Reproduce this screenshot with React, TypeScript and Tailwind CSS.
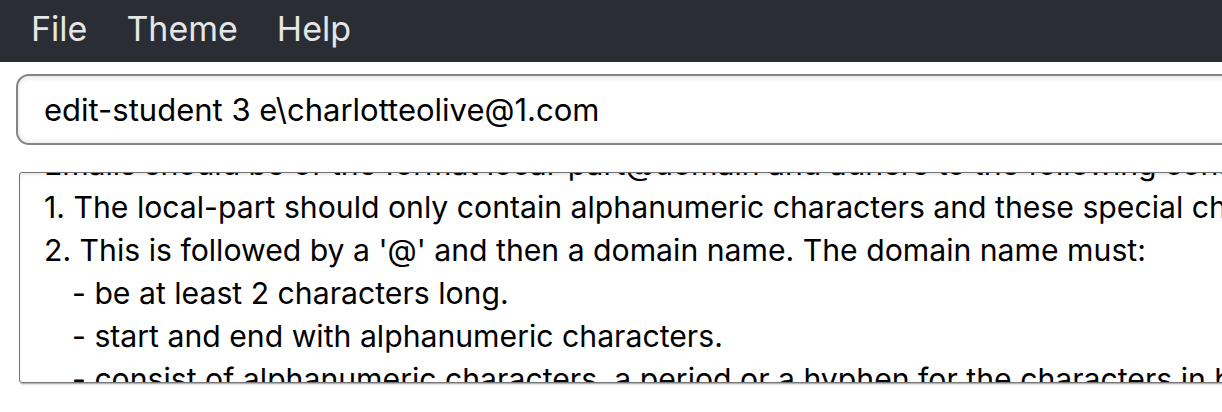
const lines = [
  { text: 'Emails should be of the format local-part@domain and adhere to the following constraints:', sub: false },
  { text: '1. The local-part should only contain alphanumeric characters and these special characters, excluding the parentheses, (+_.-).', sub: false },
  { text: "2. This is followed by a '@' and then a domain name. The domain name must:", sub: false },
  { text: '- be at least 2 characters long.', sub: true },
  { text: '- start and end with alphanumeric characters.', sub: true },
  { text: '- consist of alphanumeric characters, a period or a hyphen for the characters in between, if any.', sub: true },
];

export default function App() {
  return (
    <div
      className="w-[1222px] h-[412px] overflow-hidden bg-white"
      style={{ fontFamily: 'Inter, "Noto Sans", sans-serif' }}
    >
      <div className="h-[62px] bg-[#2a2d34] flex items-center gap-[39px] pl-[31px] pb-[6px] text-[34px] text-[#e6e6e6]">
        <span>File</span>
        <span>Theme</span>
        <span>Help</span>
      </div>

      <div className="pl-4 pt-3">
        <div className="w-[1400px] h-[71px] rounded-[13px] border-2 border-[#858585] bg-white shadow-[inset_0_3px_4px_rgba(0,0,0,0.08),inset_0_-3px_4px_rgba(0,0,0,0.06)] flex items-center pl-[26px] pt-[2px] text-[31px] text-black">
          edit-student 3 e\charlotteolive@1.com
        </div>
      </div>

      <div className="pl-[19px] pt-[27px]">
        <div className="w-[1400px] h-[211px] rounded-[3px] border border-[#777] shadow-[1px_1px_2px_rgba(0,0,0,0.4),inset_0_2px_3px_rgba(0,0,0,0.1)] overflow-hidden bg-white">
          <div className="-mt-[30px] pl-6 text-[30.2px] leading-[43px] text-black whitespace-nowrap">
            {lines.map(l => (
              <div key={l.text} className={l.sub ? 'pl-[28px]' : ''}>
                {l.text}
              </div>
            ))}
          </div>
        </div>
      </div>
    </div>
  );
}
